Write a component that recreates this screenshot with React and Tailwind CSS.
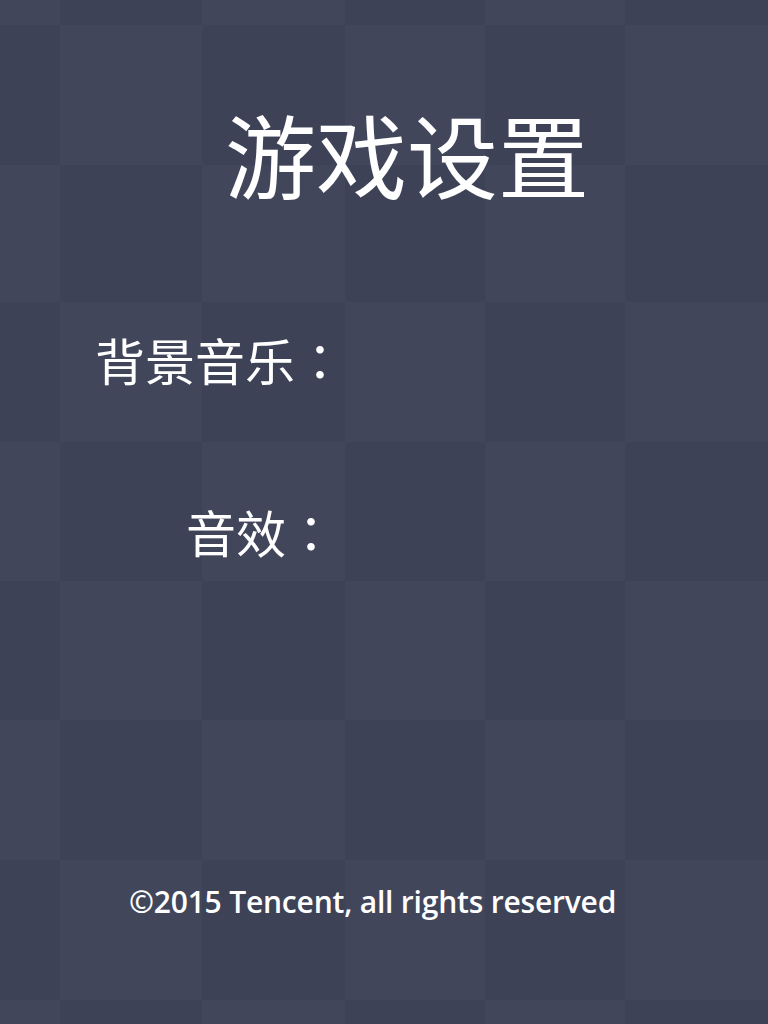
export default function App() {
  const cols = 6;
  const rows = 9;
  const cells = [];
  for (let r = 0; r < rows; r++) {
    for (let c = 0; c < cols; c++) {
      cells.push(
        <div key={r + "-" + c} className={(r + c) % 2 === 0 ? "bg-[#42465b]" : "bg-[#3d4256]"} />
      );
    }
  }
  const colon = <span style={{ fontFamily: '"Noto Sans CJK TC", sans-serif' }}>：</span>;
  return (
    <div className="relative w-[768px] h-[1024px] overflow-hidden text-white" style={{ fontFamily: '"Noto Sans CJK SC", "Noto Sans", sans-serif' }}>
      <div className="absolute inset-0 grid grid-cols-[60px_142px_143px_140px_140px_143px] grid-rows-[25px_140px_137px_140px_139px_139px_140px_140px_24px]">
        {cells}
      </div>
      <div className="relative flex flex-col h-full">
        <h1 className="mt-[93px] pl-[225px] text-[91px] leading-[1.3] font-normal">游戏设置</h1>
        <div className="mt-[116px] flex flex-col text-[50px] leading-[1.3]">
          <div className="pl-[95px]">背景音乐{colon}</div>
          <div className="mt-[107px] pl-[186px]">音效{colon}</div>
        </div>
        <div className="mt-auto mb-[100px] pl-[129px] text-[30px] font-semibold tracking-[-0.2px]" style={{ fontFamily: '"Open Sans", sans-serif' }}>
          ©2015 Tencent, all rights reserved
        </div>
      </div>
    </div>
  );
}
